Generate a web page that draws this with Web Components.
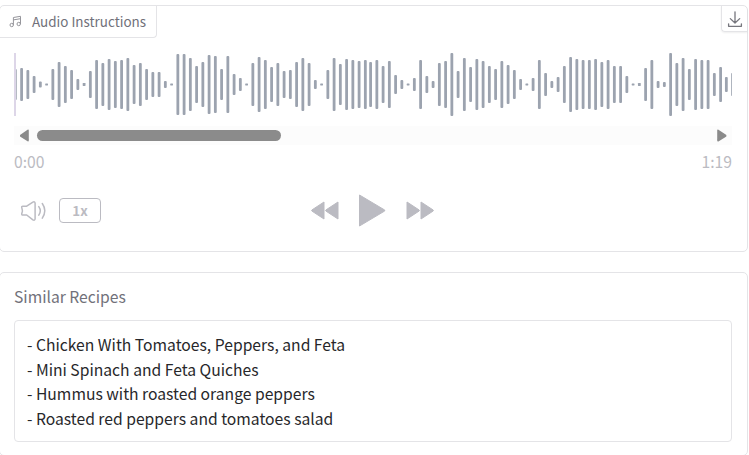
<!DOCTYPE html>
<html lang="en">
<head>
<meta charset="utf-8">
<title>Recipe</title>
<style>
html,body{margin:0;height:455px;overflow:hidden;background:#fff}
body{font-family:"Noto Sans CJK SC","Noto Sans",sans-serif;color:#27272a}
</style>
</head>
<body>
<recipe-page>
  <audio-panel label="Audio Instructions"></audio-panel>
  <text-panel label="Similar Recipes">- Chicken With Tomatoes, Peppers, and Feta
- Mini Spinach and Feta Quiches
- Hummus with roasted orange peppers
- Roasted red peppers and tomatoes salad</text-panel>
</recipe-page>
<script>
const define = (name, html, init) => customElements.define(name, class extends HTMLElement {
  connectedCallback() {
    if (this.shadowRoot) return;
    const root = this.attachShadow({mode: 'open'});
    const t = document.createElement('template');
    t.innerHTML = html;
    root.append(t.content.cloneNode(true));
    if (init) init(this, root);
  }
});

define('recipe-page', `<style>
:host{display:flex;flex-direction:column;gap:20px;box-sizing:border-box;width:749px;margin-left:-1px;padding-top:5px}
</style><slot></slot>`);

// Waveform: bar heights in px
const heights = [31,33,29,17,6,2,31,45,37,29,11,3,27,49,43,51,47,49,53,39,43,31,25,25,7,2,61,61,53,37,45,59,57,31,57,21,13,2,43,55,49,35,43,27,29,45,53,43,9,2,29,53,41,51,49,47,49,
45,49,37,47,19,9,2,13,49,17,7,43,47,63,27,53,35,51,47,37,31,47,39,29,11,2,13,49,23,7,15,37,55,51,49,49,51,45,49,37,37,17,2,3,33,49,7,5,63,43,53,31,51,49,49,23,35,
15,23];
define('wave-form', `<style>
:host{display:block;height:63px}svg{display:block}
</style><svg width="718" height="63" viewBox="0 0 718 63"><g fill="#9ca3af"></g><rect width="2" height="63" fill="#ddd6e8"/></svg>`, (el, root) => {
  const g = root.querySelector('g');
  heights.forEach((h, i) => {
    const x = i * 6.25 - (i > 113 ? 1.5 : i > 56 ? 1 : 0) - .05;
    const r = document.createElementNS('http://www.w3.org/2000/svg', 'rect');
    for (const [k, v] of Object.entries({x, y: 31.5 - h / 2, width: 2.8, height: h, rx: h > 3 ? 1 : .4})) r.setAttribute(k, v);
    g.append(r);
  });
});

define('scroll-bar', `<style>
:host{display:flex;align-items:center;box-sizing:border-box;height:19px;background:#fcfcfc;padding:0 5px 0 6px}
i{width:244px;height:11px;border-radius:6px;background:#8b8b8b;margin:0 auto 0 8px}
svg{display:block}
</style><svg width="9" height="13" viewBox="0 0 9 13"><path d="M8 1.300v10.400L.8 7v-.600z" fill="#8b8b8b" stroke="#8b8b8b" stroke-width="1.600" stroke-linejoin="round"/></svg><i></i>
<svg width="10" height="13" viewBox="0 0 10 13"><path d="M1 1.300v10.400L8.600 7v-.600z" fill="#8b8b8b" stroke="#8b8b8b" stroke-width="1.600" stroke-linejoin="round"/></svg>`);

define('player-controls', `<style>
:host{display:grid;grid-template-columns:1fr auto 1fr;align-items:center;height:34px;color:#bbbbc2}
.left{display:flex;align-items:center;gap:11px;padding-left:6px}
.mid{display:flex;align-items:center;gap:20px;padding-right:2px}
b{box-sizing:border-box;width:42px;height:25px;border:1px solid #bbbbc2;border-radius:4px;text-align:center;font-size:13.400px;line-height:22px;font-weight:700}
svg{display:block}
</style>
<div class="left">
<svg width="28" height="23" viewBox="0 -1 28 23" fill="none" stroke="currentColor" stroke-width="1.5" stroke-linecap="round" stroke-linejoin="round"><path d="M2.7 6.2h4l6.2-4.1q1.9-.9 2.2 1v15.8q-.3 1.900-2.200 1l-6.200-4.900h-4q-1.100 0-1-1.100c.9-2.200.9-4.400 0-6.600q-.1-1.100 1-1.100z"/><path d="M18.800 6.600q3 4.200 0 8.600M22.300 3.500q5 7.200 0 14.600"/></svg>
<b>1x</b></div>
<div class="mid">
<svg width="28" height="19" viewBox="0 0 28 19" fill="currentColor" stroke="currentColor" stroke-linejoin="round"><path d="M13 1v17L.8 10v-1zM27 1v17L14.800 10v-1z"/></svg>
<svg width="27" height="33" viewBox="0.500 0 27 33" fill="currentColor" stroke="currentColor" stroke-linejoin="round"><path d="M1 1v31L26.200 17v-1z"/></svg>
<svg width="28" height="19" viewBox="0 0 28 19" fill="currentColor" stroke="currentColor" stroke-linejoin="round"><path d="M1 1v17L13.200 10v-1zM15 1v17L27.200 10v-1z"/></svg>
</div><span></span>`);

define('audio-panel', `<style>
:host{display:block;box-sizing:border-box;height:247px;border:1px solid #e4e4e7;border-radius:5px;background:#fff}
header{display:flex;justify-content:space-between;height:32px}
.label{display:flex;align-items:center;box-sizing:border-box;height:32px;width:157px;padding-left:9px;gap:10px;border:solid #e4e4e7;border-width:0 1px 1px 0;border-radius:0 0 4px 0;font-size:13.440px;color:#71717a;line-height:20px;white-space:nowrap}
.label span{padding-bottom:2px}
.dl{box-sizing:border-box;width:26px;height:26px;border:solid #e4e4e7;border-width:0 0 1px 1px;border-radius:0 4px 0 4px;box-shadow:0 1px 2px #0001;padding:5px 0 0 5px}
.body{padding:15px 15px 0 14px}
scroll-bar{margin-top:10px}
.times{display:flex;justify-content:space-between;font-size:15.680px;line-height:24px;margin-top:5px;color:#bbbbc2}
player-controls{margin-top:19px}
svg{display:block}
</style>
<header><div class="label"><svg width="13" height="13" viewBox="0 0 13 13" fill="none" stroke="#96969c" stroke-width="1"><circle cx="2.700" cy="10" r="1.700"/><circle cx="9.700" cy="9" r="1.700"/><path d="M4.400 10V2.500L11.500 1.300V9M4.400 4.900l7.100-1.200"/></svg><span></span></div>
<div class="dl"><svg width="16" height="17" viewBox="0 0 16 17" fill="none" stroke="#76767d" stroke-width="1.300" stroke-linecap="round" stroke-linejoin="round"><path d="M8 .8v11M3.300 7.600 8 12l4.700-4.400M1.600 12.800v2.500h12.800v-2.500"/></svg></div></header>
<div class="body"><wave-form></wave-form><scroll-bar></scroll-bar><div class="times"><span>0:00</span><span>1:19</span></div><player-controls></player-controls></div>`,
(el, root) => { root.querySelector('.label span').textContent = el.getAttribute('label'); });

define('text-panel', `<style>
:host{display:block;box-sizing:border-box;height:184px;border:1px solid #e4e4e7;border-radius:5px;background:#fff;padding:12px 15px 0 14px}
.title{font-size:15.680px;line-height:24px;color:#71717a}
.box{box-sizing:border-box;height:122px;margin-top:11px;border:1px solid #e4e4e7;border-radius:4px;padding:12px 12px;font-size:15.680px;line-height:24.600px;white-space:pre-line}
</style><div class="title"></div><div class="box"><slot></slot></div>`,
(el, root) => { root.querySelector('.title').textContent = el.getAttribute('label'); });
</script>
</body>
</html>
